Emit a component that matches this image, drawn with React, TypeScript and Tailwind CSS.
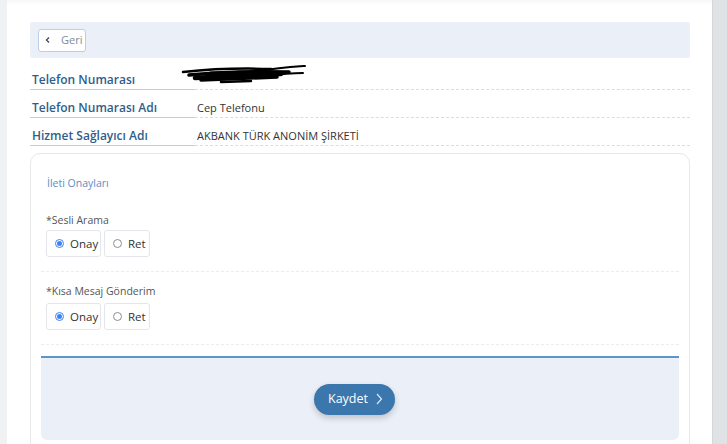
import React from "react";

function Radio({ checked, label, w }: { checked: boolean; label: string; w: string }) {
  return (
    <div className={`flex h-[27px] items-center rounded-[3px] border border-[#e3e7eb] bg-white pl-[8px] ${w}`}>
      {checked ? (
        <span className="flex h-[9px] w-[9px] items-center justify-center rounded-full border border-[#3b82f6] bg-white">
          <span className="h-[5px] w-[5px] rounded-full bg-[#3b82f6]" />
        </span>
      ) : (
        <span className="h-[9px] w-[9px] rounded-full border border-[#8a8f95] bg-white" />
      )}
      <span className="ml-[6px] text-[11.5px] text-[#333]">{label}</span>
    </div>
  );
}

function Row({ label, value, first }: { label: string; value?: React.ReactNode; first?: boolean }) {
  return (
    <div className={`flex h-[28px] ${first ? "mt-[4px]" : ""}`}>
      <div className="flex w-[165px] items-center border-b border-[#b7d0ea] pl-[2px] pt-[9px] text-[12px] font-semibold text-[#2f5e8c]">
        {label}
      </div>
      <div className="flex flex-1 items-center border-b border-dashed border-[#cfe0f2] pl-[2px] pt-[9px] text-[11px] text-[#333]">
        {value}
      </div>
    </div>
  );
}

function Scribble() {
  return (
    <svg width="126" height="22" viewBox="0 0 126 22" className="-ml-[16px] -mt-[12px]">
      <g stroke="#000" strokeLinecap="round" fill="none">
        <path d="M2 9 C30 6 60 5 90 6" strokeWidth="2.5" />
        <path d="M8 12 C40 9 70 8 108 9" strokeWidth="3.5" />
        <path d="M14 15 C40 13 70 12 100 11" strokeWidth="4.5" />
        <path d="M20 17 C45 16 70 15 96 14" strokeWidth="3.5" />
        <path d="M30 12 L75 11" strokeWidth="7" />
        <path d="M80 8 C95 5 110 4 124 3" strokeWidth="2" />
        <path d="M85 13 C100 11 110 10 122 10" strokeWidth="2" />
        <path d="M40 19 L70 18" strokeWidth="2.5" />
      </g>
    </svg>
  );
}

export default function App() {
  return (
    <div
      className="flex h-[444px] w-[727px] overflow-hidden bg-white"
      style={{ fontFamily: '"Open Sans", "Noto Sans", sans-serif' }}
    >
      <div className="w-[7px] shrink-0 bg-[#eff1f3]" />
      <div className="flex-1 bg-white pl-[23px] pr-[22px] pt-[22px] shadow-[inset_0_5px_5px_-3px_rgba(0,0,0,0.04)]">
        <div className="flex h-[36px] items-center rounded-[3px] bg-[#ebf0f8] px-[8px]">
          <button className="flex h-[23px] w-[48px] items-center rounded-[3px] border border-[#b9cfe8] bg-white pl-[5px] text-[11px] text-[#7d8d9f]">
            <svg width="8" height="8" viewBox="0 0 8 8" className="mr-[9px] shrink-0">
              <path d="M5 1.5 L2.5 4 L5 6.5" stroke="#3c4a5a" strokeWidth="1.3" fill="none" />
            </svg>
            Geri
          </button>
        </div>
        <Row first label="Telefon Numarası" value={<Scribble />} />
        <Row label="Telefon Numarası Adı" value="Cep Telefonu" />
        <Row label="Hizmet Sağlayıcı Adı" value="AKBANK TÜRK ANONİM ŞİRKETİ" />

        <div className="mt-[7px] h-[300px] rounded-[10px] border border-[#e6e9ec] px-[10px] pt-[20px]">
          <div className="flex h-[20px] items-center pl-[6px] text-[10.5px] text-[#5a8fc6]">İleti Onayları</div>
          <div className="mt-[19px] flex h-[16px] items-center pl-[5px] text-[10.5px] text-[#555]">*Sesli Arama</div>
          <div className="mt-[1px] flex gap-[3px] pl-[5px]">
            <Radio checked label="Onay" w="w-[55px]" />
            <Radio checked={false} label="Ret" w="w-[46px]" />
          </div>
          <div className="mt-[14px] border-b border-dashed border-[#ececec]" />
          <div className="mt-[12px] flex h-[16px] items-center pl-[5px] text-[10.5px] text-[#555]">*Kısa Mesaj Gönderim</div>
          <div className="mt-[3px] flex gap-[3px] pl-[5px]">
            <Radio checked label="Onay" w="w-[55px]" />
            <Radio checked={false} label="Ret" w="w-[46px]" />
          </div>
          <div className="mt-[14px] border-b border-dashed border-[#ececec]" />
          <div className="mt-[11px] flex h-[84px] items-center justify-center rounded-b-[6px] border-t-2 border-[#5b96c9] bg-[#ebf0f8] pr-[12px]">
            <button className="flex h-[31px] w-[81px] items-center justify-center rounded-full bg-[#3b76ac] pl-[4px] text-[12.5px] text-white shadow-[0_3px_6px_rgba(0,0,0,0.2)]">
              Kaydet
              <svg width="10" height="14" viewBox="0 0 10 14" className="ml-[6px]">
                <path d="M3 2 L7.5 7 L3 12" stroke="#dbe7f3" strokeWidth="1.2" fill="none" />
              </svg>
            </button>
          </div>
        </div>
      </div>
      <div className="w-[15px] shrink-0 border-l border-[#d4d8db] bg-[#dfe3e6]" />
    </div>
  );
}
